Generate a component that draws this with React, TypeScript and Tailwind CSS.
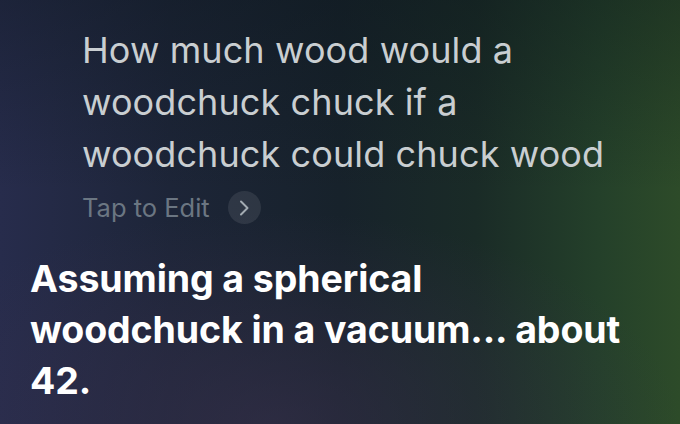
import React from "react";

export default function App() {
  return (
    <div className="relative w-[680px] h-[424px] overflow-hidden bg-[linear-gradient(90deg,#272c4c_0%,#1d2538_25%,#17222b_50%,#1a2b27_70%,#24402a_88%,#2d4b29_100%)]">
      <div className="absolute inset-0 bg-[radial-gradient(ellipse_60%_50%_at_40%_100%,rgba(60,50,80,0.55),transparent)]" />
      <div className="absolute inset-0 bg-[linear-gradient(180deg,rgba(10,20,25,0.35)_0%,transparent_45%)]" />
      <div className="relative flex flex-col font-['Inter',sans-serif]">
        <div className="pl-[82px] pt-[24px] text-[#c9ced1] text-[36px] leading-[52px] tracking-[0.1px]">
          <div>How much wood would a</div>
          <div>woodchuck chuck if a</div>
          <div>woodchuck could chuck wood</div>
        </div>
        <div className="pl-[82px] mt-[11px] flex items-center gap-[18px]">
          <span className="text-[25.5px] leading-[33px] text-[#6b7682]">Tap to Edit</span>
          <span className="w-[33px] h-[33px] rounded-full bg-[rgba(255,255,255,0.09)] flex items-center justify-center">
            <svg width="12" height="18" viewBox="0 0 12 18" fill="none">
              <path d="M3 2.5 L9.5 9 L3 15.5" stroke="#a3abb2" strokeWidth="2" strokeLinecap="round" strokeLinejoin="round" />
            </svg>
          </span>
        </div>
        <div className="pl-[30px] mt-[29px] text-white font-bold text-[37.5px] leading-[51px] tracking-[-0.1px]">
          <div>Assuming a spherical</div>
          <div>woodchuck in a vacuum... about</div>
          <div>42.</div>
        </div>
      </div>
    </div>
  );
}
